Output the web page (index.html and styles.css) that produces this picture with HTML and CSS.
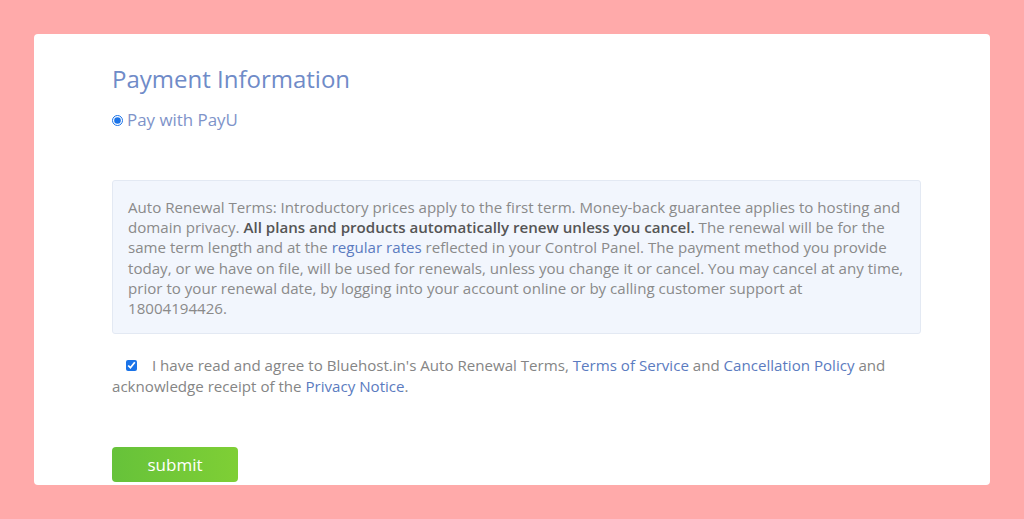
FILE: index.html
```html
<!DOCTYPE html>
<html>
<head>
<meta charset="utf-8">
<link rel="stylesheet" href="styles.css">
</head>
<body>
<div class="card">
  <h1 class="title">Payment Information</h1>
  <label class="radio-row"><input type="radio" checked class="radio"> Pay with PayU</label>
  <div class="terms">
    Auto Renewal Terms: Introductory prices apply to the first term. Money-back guarantee applies to hosting and domain privacy. <b>All plans and products automatically renew unless you cancel.</b> The renewal will be for the same term length and at the <a class="link">regular rates</a> reflected in your Control Panel. The payment method you provide today, or we have on file, will be used for renewals, unless you change it or cancel. You may cancel at any time, prior to your renewal date, by logging into your account online or by calling customer support at 18004194426.
  </div>
  <p class="agree"><input type="checkbox" checked class="check"> I have read and agree to Bluehost.in's Auto Renewal Terms, <a class="link">Terms of Service</a> and <a class="link">Cancellation Policy</a> and acknowledge receipt of the <a class="link">Privacy Notice</a>.</p>
  <button class="submit">submit</button>
</div>
</body>
</html>
```

FILE: styles.css
```css
html, body {
  margin: 0;
  padding: 0;
  background: #ffaaaa;
  font-family: "Open Sans", "Liberation Sans", sans-serif;
}
.card {
  margin: 34px 34px 0 34px;
  width: 956px;
  height: 451px;
  box-sizing: border-box;
  background: #ffffff;
  border-radius: 4px;
  padding: 0 69px 0 78px;
  overflow: hidden;
}
.title {
  margin: 0;
  padding-top: 29px;
  font-size: 24px;
  font-weight: 400;
  line-height: 32px;
  color: #6f8bc8;
}
.radio-row {
  display: flex;
  align-items: center;
  margin-top: 14px;
  font-size: 16.9px;
  line-height: 22px;
  color: #7e93c9;
}
.radio {
  width: 11px;
  height: 11px;
  margin: 0 4px 0 0;
  accent-color: #1a73e8;
}
.terms {
  margin-top: 49px;
  background: #f2f6fd;
  border: 1px solid #e3e9f3;
  border-radius: 3px;
  padding: 16px 16px 15px 15px;
  font-size: 15.1px;
  line-height: 20.2px;
  color: #8a8a8a;
  height: 154px;
  box-sizing: border-box;
}
.terms b {
  color: #555;
  font-weight: 600;
}
.link {
  color: #5b7bc0;
}
.agree {
  margin: 21px 0 0 0;
  font-size: 15.1px;
  line-height: 21px;
  color: #858585;
}
.check {
  width: 11px;
  height: 11px;
  margin: 0 11px 0 14px;
  accent-color: #1a73e8;
  vertical-align: 0px;
}
.submit {
  display: block;
  margin-top: 50px;
  width: 126px;
  height: 35px;
  border: none;
  border-radius: 4px;
  background: linear-gradient(90deg, #66c23a, #7fcf35);
  color: #ffffff;
  font-family: "Open Sans", "Liberation Sans", sans-serif;
  font-size: 17px;
  padding: 0;
}
```
